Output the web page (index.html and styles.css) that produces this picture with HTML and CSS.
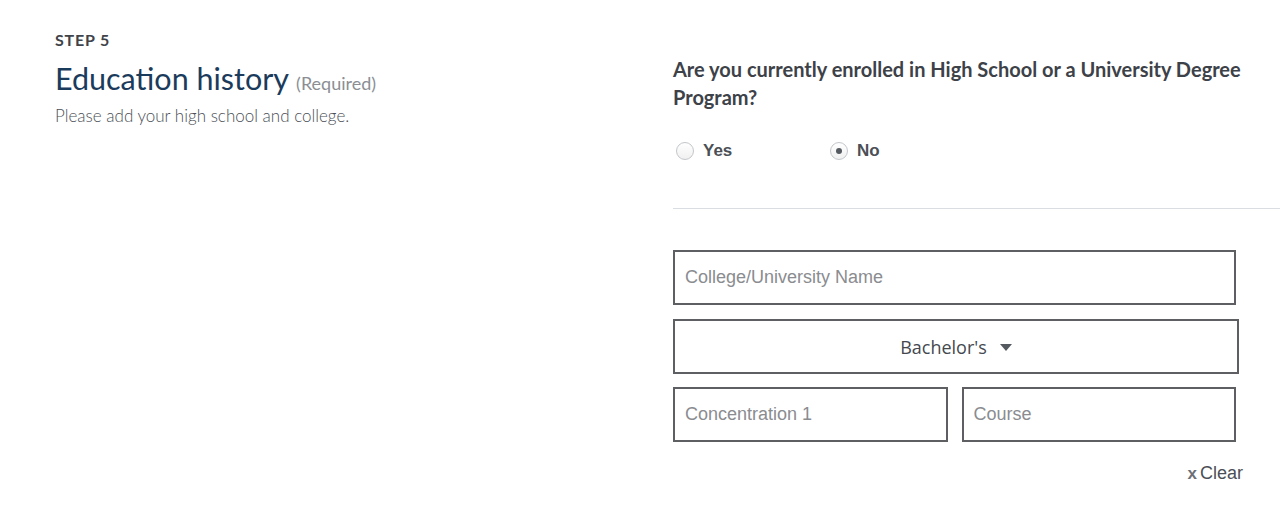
FILE: index.html
```html
<!DOCTYPE html>
<html lang="en">
<head>
<meta charset="utf-8">
<title>Education history</title>
<link rel="stylesheet" href="styles.css">
</head>
<body>
<div class="page">
  <section class="intro">
    <div class="step">STEP 5</div>
    <h1 class="title">Education history <span class="req">(Required)</span></h1>
    <p class="desc">Please add your high school and college.</p>
  </section>
  <section class="form">
    <h2 class="question">Are you currently enrolled in High School or a University Degree Program?</h2>
    <div class="radios">
      <label class="radio"><span class="dot"></span>Yes</label>
      <label class="radio"><span class="dot checked"></span>No</label>
    </div>
    <div class="divider"></div>
    <div class="fields">
      <div class="input full">College/University Name</div>
      <div class="select">Bachelor's <span class="caret"></span></div>
      <div class="row">
        <div class="input">Concentration 1</div>
        <div class="input">Course</div>
      </div>
      <div class="clear"><span class="x">x</span>Clear</div>
    </div>
  </section>
</div>
</body>
</html>
```
FILE: styles.css
```css
html, body { margin: 0; padding: 0; background: #fff; }
body { font-family: Lato, "Open Sans", sans-serif; }
.page { display: flex; padding-left: 55px; padding-top: 30px; }
.intro { width: 618px; flex: none; }
.step { font-size: 16px; font-weight: 700; color: #3f434a; letter-spacing: 0.8px; line-height: 20px; }
.title { margin: 10px 0 0; font-size: 30.5px; font-weight: 400; color: #1b3b5c; line-height: 36px; }
.req { font-size: 18px; color: #8b8f94; font-weight: 400; }
.desc { margin: 4px 0 0; font-size: 17px; font-weight: 300; color: #4b4f56; line-height: 22px; }
.form { flex: 1; padding-top: 25px; }
.question { margin: 0; font-size: 20px; font-weight: 700; color: #3d4148; line-height: 28px; padding-right: 30px; }
.radios { display: flex; margin-top: 26px; height: 28px; align-items: center; }
.radio { display: flex; align-items: center; width: 154px; font-family: "Liberation Sans", Arial, sans-serif; font-weight: 700; font-size: 17px; color: #4b4f56; }
.dot { width: 18px; height: 18px; border: 1px solid #c4c6ca; border-radius: 50%; margin: 0 9px 0 3px; box-sizing: border-box; display: flex; align-items: center; justify-content: center; background: linear-gradient(#fff, #f0f0f0); }
.dot.checked::after { content: ""; width: 6px; height: 6px; border-radius: 50%; background: #555a60; }
.divider { height: 1px; background: #dadde1; margin-top: 43px; }
.fields { width: 570px; padding-top: 41px; display: flex; flex-direction: column; }
.input { box-sizing: border-box; height: 55px; border: 2px solid #5d5f63; display: flex; align-items: center; padding-left: 10px; font-family: "Liberation Sans", Arial, sans-serif; font-size: 18px; color: #8a8c90; }
.input.full { width: 563px; }
.select { box-sizing: border-box; width: 566px; height: 55px; margin-top: 14px; border: 2px solid #5d5f63; display: flex; align-items: center; justify-content: center; font-family: "Open Sans", sans-serif; font-size: 18px; color: #444950; }
.caret { width: 0; height: 0; border-left: 6px solid transparent; border-right: 6px solid transparent; border-top: 7px solid #555a60; margin-left: 13px; margin-top: 1px; }
.row { display: flex; gap: 14px; margin-top: 13px; width: 563px; }
.row .input { flex: 1; }
.clear { align-self: flex-end; margin-top: 21px; font-family: "Liberation Sans", Arial, sans-serif; font-size: 18px; color: #4b4f56; }
.x { font-weight: 700; font-size: 17px; color: #6b6f75; margin-right: 3px; }
```
